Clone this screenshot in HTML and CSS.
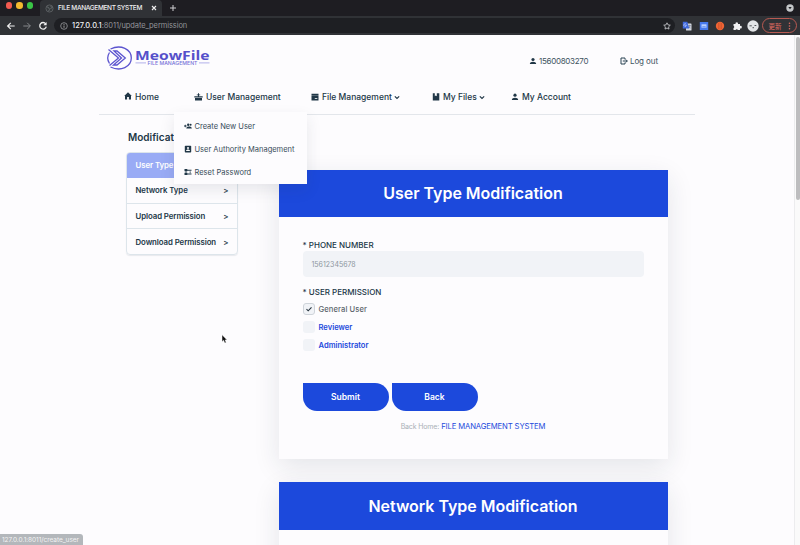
FILE: index.html
```html
<!DOCTYPE html>
<html lang="en">
<head>
<meta charset="utf-8">
<title>FILE MANAGEMENT SYSTEM</title>
<link rel="stylesheet" href="styles.css">
</head>
<body>
<div class="tabstrip">
  <div class="lights"><i class="red"></i><i class="yellow"></i><i class="green"></i></div>
  <div class="tab">
    <svg class="globe" viewBox="0 0 10 10"><circle cx="5" cy="5" r="4" fill="#34383b" stroke="#5d6164"/><path d="M2 3l2 1 1 2-1 2M6 2l2 2-2 1" stroke="#696d70" fill="none"/></svg>
    <span class="tab-title">FILE MANAGEMENT SYSTEM</span>
    <svg class="tab-close" viewBox="0 0 6 6"><path d="M1 1l4 4M5 1L1 5" stroke="#eee" stroke-width="1.1"/></svg>
  </div>
  <svg class="plus" viewBox="0 0 8 8"><path d="M4 1v6M1 4h6" stroke="#cfcfd2" stroke-width="1"/></svg>
  <svg class="window-menu" viewBox="0 0 8 8"><circle cx="4" cy="4" r="3.7" fill="#c4c6c9"/><path d="M2.3 3h3.4L4 5.3z" fill="#202126"/></svg>
</div>
<div class="toolbar">
  <svg class="nav-icon" viewBox="0 0 10 10"><path d="M8.7 5H1.8M4.8 1.8L1.6 5l3.2 3.2" fill="none" stroke="#f0f0f0" stroke-width="1.2"/></svg>
  <svg class="nav-icon" viewBox="0 0 10 10"><path d="M1.3 5h6.9M5.2 1.8L8.4 5 5.2 8.2" fill="none" stroke="#85878a" stroke-width="1"/></svg>
  <svg class="nav-icon" viewBox="0 0 10 10"><path d="M7.7 2.8A3.3 3.3 0 1 0 8.3 5.6" fill="none" stroke="#f0f0f0" stroke-width="1.3"/><path d="M8.6 1v3.2H5.3z" fill="#f0f0f0"/></svg>
  <div class="address">
    <svg class="info" viewBox="0 0 8 8"><circle cx="4" cy="4" r="3.3" fill="none" stroke="#9a9ca0" stroke-width=".8"/><path d="M4 3.5v2.3M4 2v.9" stroke="#aaa" stroke-width=".9"/></svg>
    <span class="url"><b>127.0.0.1</b>:8011/update_permission</span>
    <svg class="star" viewBox="0 0 8 8"><path d="M4 .8l1 2.1 2.3.3-1.7 1.6.4 2.3-2-1.1-2 1.1.4-2.3L.7 3.200l2.300-.3z" fill="none" stroke="#d0d2d5" stroke-width=".8"/></svg>
  </div>
  <div class="extensions">
    <svg viewBox="0 0 10 10"><rect x="4" y="2.500" width="5.500" height="7" rx=".6" fill="#d5d9e2"/><path d="M.8.8h4.500l2 6.700H.8z" fill="#3f68dc"/><path d="M4.200 3.300a1.300 1.300 0 1 0 .2 1H3.200" fill="none" stroke="#dce5ff" stroke-width=".6"/><path d="M6.300 4.500h2.400M7.500 3.800v.7M8.300 4.700L7 7M6.900 5.500l1.700 1.600" stroke="#59637a" stroke-width=".5"/></svg>
    <svg viewBox="0 0 10 10"><rect x=".8" y="1" width="8.400" height="8" fill="#4679ed"/><path d="M2.500 3.300h5v3.400h-5z" fill="#b9d0ff"/><path d="M3.300 5.700h3.400" stroke="#4679ed" stroke-width=".7"/></svg>
    <svg viewBox="0 0 10 10"><circle cx="5" cy="5" r="4.200" fill="#ef6535"/><path d="M3.500 2v6M5 1.500v7M6.500 2v6" stroke="#c94d28" stroke-width=".6"/></svg>
    <svg viewBox="0 0 10 10"><path d="M1.500 3h2a1.300 1.300 0 1 1 2.500 0h2v2a1.300 1.300 0 1 1 0 2.400v1.600H5.900a1.200 1.200 0 0 0-2.300 0H1.500V7a1.200 1.200 0 0 0 0-2.200z" fill="#f1f1f3"/></svg>
    <svg class="avatar" viewBox="0 0 12 12"><circle cx="6" cy="6" r="5.700" fill="#e3e5e8"/><path d="M2.500 5.800h2.300M7.500 5.500h1.800M5.500 7.700h1.500" stroke="#53565b" stroke-width="1"/></svg>
  </div>
  <div class="update"><span>更新</span><svg viewBox="0 0 3 8"><g fill="#e06b61"><circle cx="1.500" cy="1.200" r=".8"/><circle cx="1.500" cy="4" r=".8"/><circle cx="1.500" cy="6.800" r=".8"/></g></svg></div>
</div>

<main class="page">
  <header class="header">
    <div class="topline">
      <svg class="logo" viewBox="0 0 106 24">
        <g fill="none" stroke="#5c54cf" stroke-width="1.300"><path d="M3.500 6.500a10 10 0 0 0 0 11M4.500 3C15-2 25.300 3.500 25.300 12S15 26 4.500 21"/><path d="M2.500 3.500L12.500 12 3.500 19.500M8 5h3l8.300 7-8.300 7H7.500l8-7z"/></g>
        <text class="brand" x="29" y="13.500" textLength="74.500" lengthAdjust="spacingAndGlyphs">MeowFile</text>
        <path d="M29.500 16.900h10.500M93 16.900h10.500" stroke="#9490e2" stroke-width=".7"/>
        <text class="brand-sub" x="41.500" y="19" textLength="50" lengthAdjust="spacingAndGlyphs">FILE MANAGEMENT</text>
      </svg>
      <div class="account phone"><svg class="ic" viewBox="0 0 8 8"><circle cx="4" cy="2.500" r="1.600"/><path d="M.8 7c0-3 6.400-3 6.400 0z"/></svg><span>15600803270</span></div>
      <div class="account logout"><svg class="ic" viewBox="0 0 8 8"><path d="M5 2.500V1H1v6h4V5.500M2.800 4h4.500M5.800 2.500L7.300 4 5.800 5.500" fill="none" stroke="#294252"/></svg><span>Log out</span></div>
    </div>
    <nav class="nav">
      <a class="n-home"><svg class="ic" viewBox="0 0 8 8"><path d="M4 .2L7.800 4H7v3.500H4.900V5H3.100v2.500H1V4H.2z"/></svg><span>Home</span></a>
      <a class="n-user"><svg class="ic wide" viewBox="0 0 9 8"><path d="M.3 3.200h8.400v1.300H.3zM1 5h7v2.500H1zM4 .2h1v3H4zM2.800 1.500h3.400v.8H2.800z"/></svg><span>User Management</span></a>
      <a class="n-file"><svg class="ic" viewBox="0 0 8 8"><path d="M.5.7h7v1.200h-7zM.5 2.200h7v5.300h-7z"/><path d="M3.800 5.500h2.500" stroke="#fff" stroke-width=".8"/></svg><span>File Management</span><svg class="chev" viewBox="0 0 5 4"><path d="M.7 1l1.800 1.800L4.300 1"/></svg></a>
      <a class="n-mine"><svg class="ic" viewBox="0 0 8 8"><path d="M.8.3h2v3l1-.8 1 .8v-3h2.500v7.300H.8z"/></svg><span>My Files</span><svg class="chev" viewBox="0 0 5 4"><path d="M.7 1l1.800 1.800L4.300 1"/></svg></a>
      <a class="n-account"><svg class="ic" viewBox="0 0 8 8"><circle cx="4" cy="2.200" r="1.600"/><path d="M.8 7c0-3 6.400-3 6.400 0z"/></svg><span>My Account</span></a>
    </nav>
    <div class="dropdown">
      <a><svg class="ic" viewBox="0 0 8 8"><circle cx="4.200" cy="2.700" r="1.200"/><circle cx="6.600" cy="2.700" r="1"/><path d="M2.300 6.500c0-2.600 5.500-2.600 5.500 0zM0 3.600h2.600v.8H0zM.9 2.700h.8v2.600H.9z"/></svg><span class="d1">Create New User</span></a>
      <a><svg class="ic" viewBox="0 0 8 8"><rect x=".8" y=".8" width="6.400" height="6.700" rx=".7"/><circle cx="4" cy="3" r="1" fill="#fff"/><path d="M2 6c0-2 4-2 4 0z" fill="#fff"/></svg><span class="d2">User Authority Management</span></a>
      <a><svg class="ic" viewBox="0 0 8 8"><path d="M.5 1h2.800v2.200H.5zM.5 4.800h2.800V7H.5zM3 1.700h4.500v1H3zM3 5.500h4.500v1H3z"/><path d="M6.200 3.300v2M2 3v2" stroke="#294252" stroke-width=".8"/></svg><span class="d3">Reset Password</span></a>
    </div>
  </header>

  <div class="content">
    <aside class="sidebar">
      <h2>Modification</h2>
      <ul>
        <li class="active"><span>User Type</span></li>
        <li><span>Network Type</span><b>&gt;</b></li>
        <li><span>Upload Permission</span><b>&gt;</b></li>
        <li><span>Download Permission</span><b>&gt;</b></li>
      </ul>
    </aside>
    <div class="cards">
      <section class="card">
        <h1><span>User Type Modification</span></h1>
        <form class="form">
          <label class="label"><span>* PHONE NUMBER</span></label>
          <div class="input"><span>15612345678</span></div>
          <label class="label second"><span>* USER PERMISSION</span></label>
          <div class="option checked"><i><svg viewBox="0 0 8 8"><path d="M1.500 4.200l1.700 1.600 3.300-3.500" fill="none" stroke="#26333f" stroke-width="1.100"/></svg></i><span>General User</span></div>
          <div class="option"><i></i><span>Reviewer</span></div>
          <div class="option"><i></i><span>Administrator</span></div>
          <div class="buttons"><div class="btn"><span>Submit</span></div><div class="btn"><span>Back</span></div></div>
          <p class="back-home"><span class="muted">Back Home:</span><a>FILE MANAGEMENT SYSTEM</a></p>
        </form>
      </section>
      <section class="card">
        <h1><span>Network Type Modification</span></h1>
      </section>
    </div>
  </div>
  <div class="scrollbar"><i></i></div>
</main>
<div class="status"><span>127.0.0.1:8011/create_user</span></div>
<svg class="cursor" viewBox="0 0 7 10"><path d="M1 .7v7l1.600-1.400L3.700 9l1.500-.6-1.100-2.500h2z" fill="#111" stroke="#fff" stroke-width=".5"/></svg>
</body>
</html>
```
FILE: styles.css
```css
* { box-sizing: border-box; }
html, body { margin: 0; height: 545px; overflow: hidden; }
body { position: relative; display: flex; flex-direction: column; background: #fdfcfe; color: #213747; font-family: Inter, "Noto Sans CJK SC", sans-serif; font-size: 8.500px; }
svg { display: block; flex: none; }
span, a { white-space: nowrap; }
i { display: block; flex: none; }

.tabstrip { height: 16px; flex: none; display: flex; align-items: center; background: #1e1d22; }
.lights { display: flex; gap: 4px; padding: 0 0 5px 6px; width: 40px; }
.lights i { width: 6.400px; height: 6.400px; border-radius: 50%; }
.red { background: #f25a50; }
.yellow { background: #f5b92f; }
.green { background: #3ac546; }
.tab { width: 122px; height: 16px; display: flex; align-items: center; padding-left: 5px; background: #303236; border-radius: 4px 4px 0 0; }
.globe { width: 9px; height: 9px; margin-right: 4px; }
.tab-title { width: 93px; color: #eeeef0; font-size: 6.500px; font-weight: 500; letter-spacing: -.33px; }
.tab-close { width: 6px; height: 6px; }
.plus { width: 8px; height: 8px; margin-left: 7px; }
.window-menu { width: 8px; height: 8px; margin: 0 6px 0 auto; }

.toolbar { height: 19px; flex: none; display: flex; align-items: center; background: #303236; padding-left: 6px; }
.nav-icon { width: 10px; height: 10px; margin-right: 6px; }
.address { width: 621px; height: 15px; display: flex; align-items: center; padding: 0 5px 0 6px; background: #1e1f23; border-radius: 8px; }
.info { width: 8px; height: 8px; margin-right: 4px; }
.url { color: #929499; font-size: 7.500px; letter-spacing: -.09px; }
.url b { color: #f0f1f3; font-weight: 500; letter-spacing: .05px; }
.star { width: 8px; height: 8px; margin: 0 -1px 0 auto; }
.extensions { display: flex; align-items: center; gap: 6.500px; margin-left: 7px; }
.extensions svg { width: 10px; height: 10px; }
.extensions .avatar { width: 12px; height: 12px; margin-left: -1.500px; }
.update { display: flex; align-items: center; justify-content: space-between; width: 35px; height: 15px; margin-left: 3px; padding: 0 5px 0 6px; border: 1px solid #b95a52; border-radius: 8px; color: #e06b61; font-size: 6.500px; }
.update svg { width: 3px; height: 8px; }

.page { position: relative; flex: 1; overflow: hidden; }
.header { position: relative; z-index: 3; width: 596px; height: 80px; margin-left: 99px; border-bottom: 1px solid #e3e6eb; }
.topline { height: 50px; display: flex; align-items: center; padding-top: 1px; }
.logo { width: 106px; height: 24px; margin: -5px 0 0 6.500px; overflow: visible; }
.brand { font: 700 13px "Open Sans", sans-serif; fill: #5650ca; }
.brand-sub { font: 500 4.500px Inter, sans-serif; fill: #7772d8; }
.account { display: flex; align-items: center; color: #40535f; font-size: 8px; }
.ic { width: 8px; height: 8px; margin-right: 3px; fill: #213747; }
.ic.wide { width: 9px; }
.phone { width: 91px; margin-left: 317px; letter-spacing: -.3px; }
.logout { letter-spacing: -.1px; }
.phone .ic, .logout .ic { margin-right: 2.500px; }
.nav { display: flex; height: 23px; align-items: center; font-weight: 500; }
.nav a { display: flex; align-items: center; }
.n-home { width: 70px; margin-left: 25px; padding-top: 1px; }
.n-home .ic { margin-top: -2px; }
.n-user { width: 117px; }
.n-file { width: 121px; }
.n-mine { width: 79px; }
.chev { width: 6px; height: 5px; margin-left: 2px; margin-top: 2px; fill: none; stroke: #213747; }
.dropdown { position: absolute; z-index: 5; left: 75px; top: 77px; width: 133px; height: 71.500px; padding-top: 3px; background: #fdfcfe; box-shadow: 0 6px 14px rgba(40, 50, 70, .1); }
.dropdown a { display: flex; align-items: center; height: 22.900px; padding-left: 10px; color: #364b58; font-size: 7.500px; }
.dropdown .ic { margin: -1px 2.500px 0 0; }

.content { display: flex; }
.sidebar { width: 112px; margin: 14.500px 40.500px 0 126px; }
.sidebar h2 { height: 16px; margin: 0 0 6.500px; padding-left: 2px; font-size: 10px; line-height: 15px; font-weight: 600; letter-spacing: 0; }
.sidebar ul { list-style: none; margin: 0; padding: 0; border: 1px solid #dde5eb; border-radius: 4px; overflow: hidden; box-shadow: 0 1px 1px rgba(50, 70, 90, .1); }
.sidebar li { display: flex; align-items: center; justify-content: space-between; height: 25.500px; padding: 0 8.500px; border-bottom: 1px solid #dde5eb; font-weight: 600; font-size: 7.800px; letter-spacing: -.06px; }
.sidebar li b { font-weight: 600; }
.sidebar li:last-child { height: 25px; border: 0; }
.sidebar li.active { height: 25px; background: #99abf5; color: #fff; border-color: #99abf5; }

.cards { width: 389px; padding-top: 54.500px; }
.card { height: 289.500px; margin-bottom: 23px; background: #fdfcfe; box-shadow: 0 8px 25px rgba(30, 45, 60, .11); }
.card h1 { height: 47.500px; margin: 0; display: flex; align-items: center; justify-content: center; background: #1c49dc; color: #fff; font-size: 16px; font-weight: 600; letter-spacing: -.03px; }
.form { padding: 21px 24px 0; }
.label { display: flex; align-items: center; height: 13px; font-size: 8px; font-weight: 500; }
.label.second { margin: 8px 0 4.500px; }
.input { display: flex; align-items: center; height: 26px; padding: 1px 0 0 9px; border-radius: 4px; background: #f1f3f7; color: #8d969e; font-size: 7px; }
.option { display: flex; align-items: center; height: 12px; margin-bottom: 6px; gap: 4px; color: #1c49dc; font-size: 7.600px; font-weight: 600; }
.option span { padding-top: 1px; }
.option i { width: 12px; height: 12px; border-radius: 3px; background: #f1f3f7; }
.checked { color: #5b646b; font-weight: 500; letter-spacing: .1px; }
.checked i { display: flex; align-items: center; justify-content: center; border: 1px solid #cfd4da; }
.checked svg { width: 8px; height: 8px; }
.buttons { display: flex; gap: 3px; margin-top: 32.500px; }
.btn { display: flex; align-items: center; justify-content: center; width: 86px; height: 28px; background: #1c49dc; border-radius: 0 14px 14px 14px; color: #fff; font-size: 8.500px; font-weight: 600; }
.back-home { display: flex; align-items: center; justify-content: center; gap: 2px; height: 12px; margin: 9px 0 0; color: #1c49dc; font-size: 7.700px; letter-spacing: -.14px; }
.muted { color: #a9b0b7; font-size: 7px; }
.scrollbar { position: absolute; z-index: 4; right: 0; top: 0; width: 6px; height: 510px; padding: 2px 1px; background: #fafafa; border-left: 1px solid #ececee; }
.scrollbar i { height: 163px; width: 4px; border-radius: 2px; background: #bdbdbf; }
.status { position: absolute; z-index: 6; left: 0; bottom: 0; display: flex; align-items: center; width: 83px; height: 11px; padding-left: 2px; background: #b3b7bb; border-radius: 0 3px 0 0; color: #f3f3f4; font-size: 6.500px; letter-spacing: -.05px; }
.cursor { position: absolute; z-index: 6; left: 221px; top: 334px; width: 7px; height: 10px; }
```
